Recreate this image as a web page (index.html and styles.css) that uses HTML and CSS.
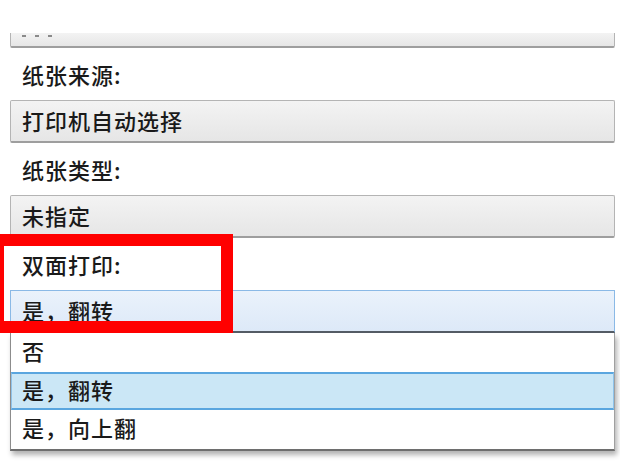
FILE: index.html
```html
<!DOCTYPE html>
<html lang="zh-CN">
<head>
<meta charset="utf-8">
<title>打印设置</title>
<link rel="stylesheet" href="styles.css">
</head>
<body>
<div class="form">
  <div class="field cut">
    <span class="dot"></span><span class="dot"></span><span class="dot"></span>
  </div>
  <div class="label">纸张来源:</div>
  <div class="field">打印机自动选择</div>
  <div class="label">纸张类型:</div>
  <div class="field">未指定</div>
  <div class="label">双面打印:</div>
  <div class="combo">是，翻转</div>
  <ul class="dropdown">
    <li class="option">否</li>
    <li class="option selected">是，翻转</li>
    <li class="option">是，向上翻</li>
  </ul>
</div>
<div class="highlight"></div>
</body>
</html>
```
FILE: styles.css
```css
html, body {
  margin: 0;
  padding: 0;
  background: #ffffff;
}
body {
  width: 620px;
  height: 473px;
  overflow: hidden;
  position: relative;
  font-family: "Noto Sans CJK SC", "Microsoft YaHei", sans-serif;
  font-size: 22px;
  font-weight: 500;
  letter-spacing: 1px;
  color: #1a1a1a;
}
.form {
  padding: 33px 5px 0 10px;
  display: flex;
  flex-direction: column;
}
.field {
  box-sizing: border-box;
  height: 43px;
  line-height: 38px;
  padding-left: 11px;
  background: linear-gradient(#f3f3f3, #e6e6e6);
  border: 1px solid #b4b4b4;
  border-bottom: 2px solid #9e9e9e;
  border-radius: 2px;
}
.field.cut {
  height: 15px;
  border-top: none;
  border-radius: 0 0 2px 2px;
  display: flex;
  gap: 9px;
  align-items: flex-start;
  padding-top: 2px;
}
.dot {
  width: 4px;
  height: 2px;
  background: #8a8a8a;
}
.label {
  height: 52px;
  line-height: 52px;
  padding-left: 12px;
}
.combo {
  box-sizing: border-box;
  height: 43px;
  line-height: 38px;
  padding-left: 11px;
  background: linear-gradient(#eaf2fb, #dde9f8);
  border: 1px solid #8ab9e6;
  border-bottom: 2px solid #555d66;
}
.dropdown {
  list-style: none;
  margin: 0;
  padding: 0;
  background: #ffffff;
  border-left: 1px solid #8c8c8c;
  border-right: 1px solid #a0a0a0;
  border-bottom: 2px solid #6e6e6e;
  box-shadow: 2px 4px 5px rgba(0, 0, 0, 0.3);
}
.option {
  box-sizing: border-box;
  height: 39px;
  line-height: 34px;
  padding-left: 11px;
}
.option.selected {
  height: 38px;
  background: #cbe7f6;
  border-top: 2px solid #5aa6df;
  border-bottom: 2px solid #5aa6df;
  border-left: 1px solid #8fc3ea;
  border-right: 1px solid #8fc3ea;
  line-height: 31px;
  padding-left: 10px;
}
.highlight {
  position: absolute;
  left: -8px;
  top: 234px;
  width: 241px;
  height: 99px;
  box-sizing: border-box;
  border: 12px solid #ff0000;
}
```
